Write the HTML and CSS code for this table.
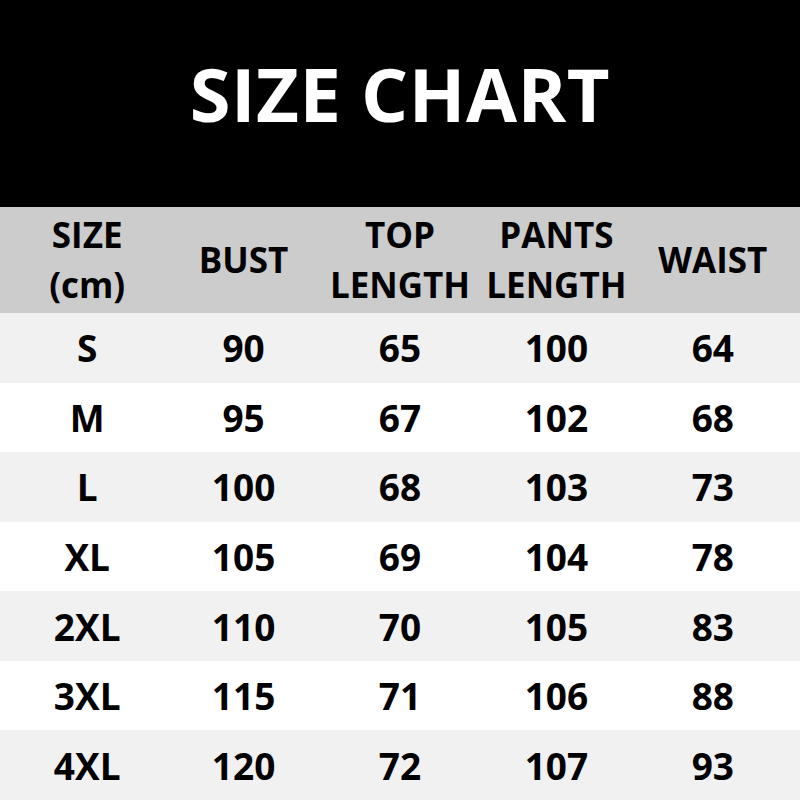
FILE: index.html
```html
<!DOCTYPE html>
<html>
<head>
<meta charset="utf-8">
<link rel="stylesheet" href="styles.css">
</head>
<body>
<div class="page">
  <header class="banner"><h1 class="title">SIZE CHART</h1></header>
  <div class="row head">
    <div class="cell">SIZE<br>(cm)</div>
    <div class="cell">BUST</div>
    <div class="cell">TOP<br>LENGTH</div>
    <div class="cell">PANTS<br>LENGTH</div>
    <div class="cell">WAIST</div>
  </div>
  <div class="row alt"><div class="cell">S</div><div class="cell">90</div><div class="cell">65</div><div class="cell">100</div><div class="cell">64</div></div>
  <div class="row"><div class="cell">M</div><div class="cell">95</div><div class="cell">67</div><div class="cell">102</div><div class="cell">68</div></div>
  <div class="row alt"><div class="cell">L</div><div class="cell">100</div><div class="cell">68</div><div class="cell">103</div><div class="cell">73</div></div>
  <div class="row"><div class="cell">XL</div><div class="cell">105</div><div class="cell">69</div><div class="cell">104</div><div class="cell">78</div></div>
  <div class="row alt"><div class="cell">2XL</div><div class="cell">110</div><div class="cell">70</div><div class="cell">105</div><div class="cell">83</div></div>
  <div class="row"><div class="cell">3XL</div><div class="cell">115</div><div class="cell">71</div><div class="cell">106</div><div class="cell">88</div></div>
  <div class="row alt"><div class="cell">4XL</div><div class="cell">120</div><div class="cell">72</div><div class="cell">107</div><div class="cell">93</div></div>
</div>
</body>
</html>
```
FILE: styles.css
```css
html, body {
  margin: 0;
  padding: 0;
  background: #fff;
}
.page {
  width: 800px;
  height: 800px;
  display: flex;
  flex-direction: column;
  font-family: "Open Sans", "Noto Sans", sans-serif;
  font-weight: 700;
  color: #000;
}
.banner {
  height: 207px;
  background: #000;
  display: flex;
  align-items: center;
  justify-content: center;
  padding-bottom: 20px;
  box-sizing: border-box;
}
.title {
  margin: 0;
  color: #fff;
  font-size: 74px;
  font-weight: 700;
  line-height: 1;
  letter-spacing: 0.5px;
}
.row {
  display: grid;
  grid-template-columns: repeat(5, 1fr);
  padding: 0 9px;
  height: 69.57px;
  align-items: center;
  background: #fff;
  font-size: 37px;
  line-height: 1;
}
.row.alt {
  background: #f1f1f1;
}
.row.head {
  height: 106px;
  background: #cccccc;
  font-size: 35px;
  line-height: 50px;
}
.cell {
  text-align: center;
}
```
